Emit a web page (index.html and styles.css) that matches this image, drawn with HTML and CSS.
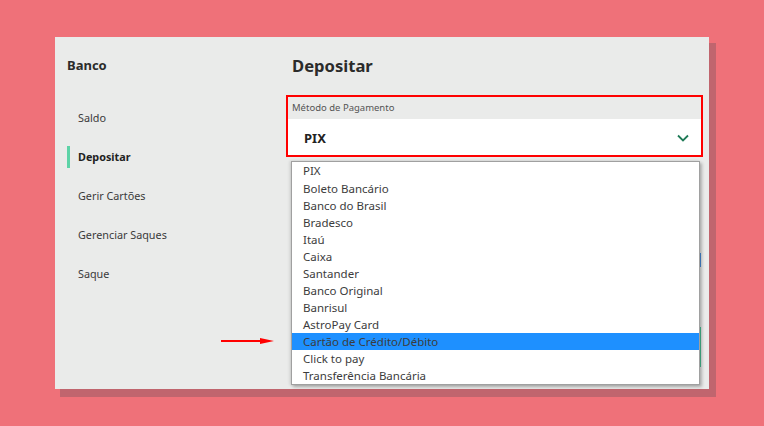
FILE: index.html
```html
<!DOCTYPE html>
<html lang="pt">
<head>
<meta charset="utf-8">
<link rel="stylesheet" href="styles.css">
</head>
<body>
<div class="panel">
  <aside class="sidebar">
    <div class="side-title">Banco</div>
    <nav class="menu">
      <div class="item"><span>Saldo</span></div>
      <div class="item active"><span>Depositar</span></div>
      <div class="item"><span>Gerir Cartões</span></div>
      <div class="item"><span>Gerenciar Saques</span></div>
      <div class="item"><span>Saque</span></div>
    </nav>
    <div class="pointer">
      <svg width="54" height="8" viewBox="0 0 54 8"><path d="M0 4 H42" stroke="#ff0000" stroke-width="2"/><path d="M39 1 L53 4 L39 7 Z" fill="#ff0000"/></svg>
    </div>
  </aside>
  <main class="main">
    <h1 class="title">Depositar</h1>
    <div class="select-wrap">
      <div class="select">
        <div class="sel-label">Método de Pagamento</div>
        <div class="sel-value">
          <span>PIX</span>
          <svg width="12" height="8" viewBox="0 0 12 8"><path d="M1 1.5 L6 6.5 L11 1.5" fill="none" stroke="#1f7a57" stroke-width="1.8"/></svg>
        </div>
      </div>
      <ul class="options">
        <li>PIX</li>
        <li>Boleto Bancário</li>
        <li>Banco do Brasil</li>
        <li>Bradesco</li>
        <li>Itaú</li>
        <li>Caixa</li>
        <li>Santander</li>
        <li>Banco Original</li>
        <li>Banrisul</li>
        <li>AstroPay Card</li>
        <li class="hl">Cartão de Crédito/Débito</li>
        <li>Click to pay</li>
        <li>Transferência Bancária</li>
      </ul>
    </div>
    <div class="field"></div>
    <div class="btn"></div>
  </main>
</div>
</body>
</html>
```
FILE: styles.css
```css
html, body {
  margin: 0;
  padding: 0;
}
body {
  width: 764px;
  height: 426px;
  background: #ef7179;
  font-family: "Noto Sans", "Open Sans", sans-serif;
  color: #333;
  overflow: hidden;
}
.panel {
  margin: 37px 0 0 55px;
  width: 654px;
  height: 352px;
  background: #eaebea;
  display: flex;
  box-shadow: 6px 7px 0 1px #c0656e;
}
.sidebar {
  width: 231px;
  padding: 19px 0 0 12px;
  box-sizing: border-box;
  position: relative;
}
.side-title {
  font-size: 13px;
  font-weight: 700;
  line-height: 18px;
  color: #2b2b2b;
}
.menu {
  margin-top: 24px;
}
.item {
  height: 39px;
  display: flex;
  align-items: center;
}
.item span {
  display: block;
  border-left: 3px solid transparent;
  padding-left: 8px;
  line-height: 22px;
  font-size: 10.8px;
  color: #3a3a3a;
}
.item.active span {
  border-left-color: #5dd3a7;
  font-weight: 700;
  color: #222;
}
.pointer {
  position: absolute;
  left: 166px;
  top: 300px;
  line-height: 0;
}
.main {
  flex: 1;
  padding-top: 17px;
  position: relative;
}
.title {
  margin: 0 0 17px 6px;
  font-size: 16.6px;
  line-height: 24px;
  font-weight: 700;
  color: #2b2b2b;
}
.select-wrap {
  position: relative;
  width: 417px;
}
.select {
  border: 2px solid #ff0000;
  height: 58px;
  display: flex;
  flex-direction: column;
}
.sel-label {
  height: 22px;
  padding-left: 4px;
  font-size: 9.5px;
  line-height: 22px;
  color: #555;
}
.sel-value {
  flex: 1;
  background: #fff;
  display: flex;
  align-items: center;
  justify-content: space-between;
  padding: 2px 12px 0 16px;
  font-size: 13px;
  font-weight: 700;
  color: #222;
}
.options {
  position: absolute;
  z-index: 2;
  left: 5px;
  top: 66px;
  width: 407px;
  margin: 0;
  padding: 0;
  list-style: none;
  background: #fff;
  border: 1px solid #a0a0a0;
  box-shadow: 2px 2px 3px rgba(0,0,0,0.25), -1px 0 3px rgba(0,0,0,0.15);
}
.options li {
  height: 17px;
  line-height: 18px;
  padding-left: 11px;
  font-size: 11.5px;
  color: #3c3c3c;
}
.options li:first-child {
  height: 18px;
}
.options li.hl {
  background: #1e90ff;
}
.field {
  margin-top: 96px;
  width: 415px;
  height: 14px;
  border-right: 1px solid #4a90e2;
  box-sizing: border-box;
}
.btn {
  margin: 60px 0 0 200px;
  width: 215px;
  height: 40px;
  background: #4cc89a;
}
```
